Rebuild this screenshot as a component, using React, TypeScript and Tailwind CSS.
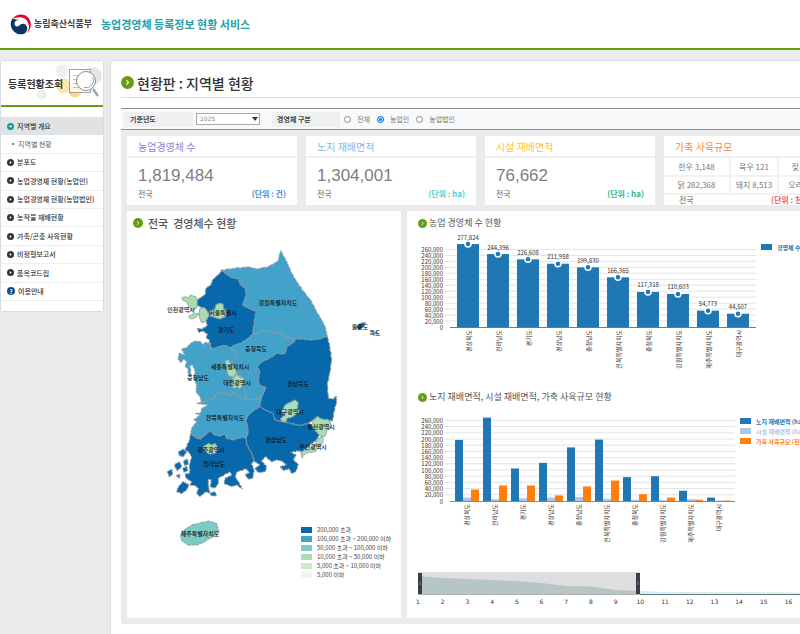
import React, { useState } from "react";

type Point = [number, number];

const MENU = [
  "분포도",
  "농업경영체 현황(농업인)",
  "농업경영체 현황(농업법인)",
  "농작물 재배현황",
  "가축/곤충 사육현황",
  "비정형보고서",
  "품목코드집",
];

const STATS = [
  { title: "농업경영체 수", value: "1,819,484", unit: "(단위 : 건)", titleClass: "text-[#8a86cf]", unitClass: "text-[#3d8fcf]" },
  { title: "노지 재배면적", value: "1,304,001", unit: "(단위 : ha)", titleClass: "text-[#7dbce6]", unitClass: "text-[#4fcfc9]" },
  { title: "시설 재배면적", value: "76,662", unit: "(단위 : ha)", titleClass: "text-[#fcc62f]", unitClass: "text-[#2db795]" },
];

const LIVESTOCK = [
  ["한우 3,148", "육우 121", "젖소 378"],
  ["닭 282,368", "돼지 8,513", "오리 9,204"],
];

const FARMS = [
  { name: "경상북도", value: 277824 },
  { name: "전라남도", value: 244396 },
  { name: "경기도", value: 226608 },
  { name: "경상남도", value: 211958 },
  { name: "충청남도", value: 199830 },
  { name: "전북특별자치도", value: 166365 },
  { name: "충청북도", value: 117318 },
  { name: "강원특별자치도", value: 110603 },
  { name: "제주특별자치도", value: 54773 },
  { name: "대구광역시", value: 44507 },
];

// open field, facility, livestock
const AREAS = [
  [197000, 11000, 37000],
  [269000, 6000, 50000],
  [105000, 9000, 50000],
  [123000, 11000, 18000],
  [173000, 13000, 47000],
  [198000, 7000, 66000],
  [77000, 4000, 22000],
  [80000, 3000, 11000],
  [33000, 6000, 4000],
  [11000, 1000, 1500],
];
const SERIES = ["#1f77b4", "#aec7e8", "#ff7f0e"];

const TICKS = Array.from({ length: 14 }, (_, i) => i * 20000);

const LEGEND = [
  { color: "bg-[#0868ac]", text: "200,000 초과" },
  { color: "bg-[#43a2ca]", text: "100,000 초과 ~ 200,000 이하" },
  { color: "bg-[#7bccc4]", text: "50,000 초과 ~ 100,000 이하" },
  { color: "bg-[#a8ddb5]", text: "10,000 초과 ~ 50,000 이하" },
  { color: "bg-[#ccebc5]", text: "5,000 초과 ~ 10,000 이하" },
  { color: "bg-[#f0f9e8]", text: "5,000 이하" },
];

// region outlines, three map units to the pixel
const REGIONS: { id: string; fill: string; d: string }[] = [
  { id: "gangwon", fill: "#43a2ca", d: "305,195 345,190 385,186 410,192 445,185 475,168 478,150 483,137 492,155 505,180 515,205 530,230 550,258 575,290 590,320 605,345 615,365 622,393 600,402 570,405 545,402 520,403 500,395 480,385 445,380 425,375 415,385 397,388 403,350 408,320 385,310 368,300 378,270 375,250 360,238 355,222 335,218 315,205" },
  { id: "chungbuk", fill: "#43a2ca", d: "350,455 345,440 330,428 345,420 365,412 385,400 397,388 415,385 425,375 445,380 480,385 500,395 520,403 525,408 510,420 500,425 498,440 490,448 470,445 450,460 425,470 412,485 420,500 415,520 418,540 438,548 430,565 425,578 395,585 378,582 375,555 370,540 372,520 355,508 340,490 335,468" },
  { id: "chungnam", fill: "#43a2ca", d: "274,432 300,424 315,420 330,428 345,440 350,455 335,468 340,490 355,508 372,520 370,540 375,555 378,582 352,575 345,562 330,572 310,563 290,565 283,578 260,588 245,592 240,575 228,560 230,540 222,518 226,500 217,480 210,482 214,515 205,510 204,490 195,485 200,470 192,462 182,472 174,462 178,445 195,450 185,432 200,428 212,415 225,408 240,410 250,420 255,412 268,415" },
  { id: "jeonbuk", fill: "#43a2ca", d: "245,592 260,588 283,578 290,565 310,563 330,572 345,562 352,575 378,582 395,585 425,578 418,605 400,618 385,630 378,645 383,665 385,685 378,700 365,697 340,705 320,700 315,687 300,693 285,690 270,678 255,690 240,703 225,697 212,685 215,670 230,650 222,645 240,630 225,625 242,625 245,610 265,600 250,598 230,595" },
  { id: "gyeonggi", fill: "#0868ac", d: "305,195 300,205 290,213 278,225 272,240 257,250 256,268 245,276 232,284 230,300 245,308 262,318 268,330 258,348 262,362 245,372 232,370 236,382 250,378 262,388 258,398 268,405 274,432 300,424 315,420 330,428 345,420 365,412 385,400 397,388 403,350 408,320 385,310 368,300 378,270 375,250 360,238 355,222 335,218 315,205" },
  { id: "gyeongbuk", fill: "#0868ac", d: "622,393 628,420 635,460 630,500 622,540 625,580 640,582 648,573 650,590 642,620 638,648 625,645 605,643 592,635 582,643 565,655 540,662 510,655 485,650 465,645 458,625 435,615 418,605 425,578 430,565 438,548 418,540 415,520 420,500 412,485 425,470 450,460 470,445 490,448 498,440 500,425 510,420 525,408 520,403 545,402 570,405 600,402" },
  { id: "gyeongnam", fill: "#0868ac", d: "418,605 435,615 458,625 465,645 485,650 510,655 540,662 565,655 575,660 585,675 598,690 590,705 570,720 548,740 535,738 512,742 528,750 520,765 535,778 528,800 515,805 508,792 490,796 480,785 500,780 485,768 470,765 455,770 436,755 425,768 440,785 436,800 415,803 405,790 420,780 402,768 395,745 380,720 378,700 385,685 383,665 378,645 385,630 400,618" },
  { id: "jeonnam", fill: "#0868ac", d: "212,685 225,697 240,703 255,690 270,678 285,690 300,693 315,687 320,700 340,705 365,697 378,700 380,720 395,745 402,768 395,775 402,795 398,820 385,822 375,810 388,802 378,792 352,800 345,815 355,830 368,853 350,840 335,845 312,835 315,820 335,810 330,800 295,820 295,835 285,850 270,845 275,825 265,823 265,845 270,865 258,860 240,875 230,865 235,850 225,842 210,840 215,830 198,820 195,807 210,805 208,780 215,755 205,740 195,735 208,705" },
  { id: "jindo", fill: "#0868ac", d: "170,860 175,845 190,830 207,840 200,855 185,865" },
  { id: "sinan1", fill: "#0868ac", d: "175,740 190,733 200,740 190,755 178,752" },
  { id: "sinan2", fill: "#0868ac", d: "162,780 178,770 186,785 172,797" },
  { id: "sinan3", fill: "#0868ac", d: "142,800 155,793 158,808 148,815" },
  { id: "sinan4", fill: "#0868ac", d: "168,812 180,808 178,820" },
  { id: "sinan5", fill: "#0868ac", d: "190,768 203,762 205,778 194,782" },
  { id: "sinan6", fill: "#0868ac", d: "188,790 200,785 204,797 192,802" },
  { id: "wando", fill: "#0868ac", d: "270,865 285,860 290,872 275,873" },
  { id: "ulleung", fill: "#0868ac", d: "708,368 718,356 736,352 731,364 718,374" },
  { id: "dokdo", fill: "#0868ac", d: "758,380 766,384 772,378 768,388" },
  { id: "seoul", fill: "#a8ddb5", d: "270,318 285,312 287,300 300,294 310,298 310,310 320,318 316,335 300,342 285,338 270,332" },
  { id: "ganghwa", fill: "#a8ddb5", d: "185,278 198,275 205,280 212,270 228,276 232,290 230,310 218,316 208,308 200,290 190,287" },
  { id: "incheon", fill: "#a8ddb5", d: "238,312 252,307 262,318 266,332 256,348 248,354 240,345 238,330" },
  { id: "yeongjong", fill: "#a8ddb5", d: "205,335 222,326 238,325 228,336 215,343" },
  { id: "sejong", fill: "#a8ddb5", d: "315,468 325,463 332,475 345,490 350,505 338,517 325,512 320,495" },
  { id: "daejeon", fill: "#a8ddb5", d: "338,520 350,508 358,515 372,520 368,540 360,552 350,545 342,552 335,540" },
  { id: "daegu", fill: "#a8ddb5", d: "485,620 495,600 510,592 525,585 535,593 532,610 538,620 525,630 515,637 500,640 500,650 485,650 482,640 495,630" },
  { id: "ulsan", fill: "#a8ddb5", d: "575,660 582,643 592,635 605,643 625,645 633,655 632,670 620,675 618,690 608,697 598,690 585,675" },
  { id: "busan", fill: "#a8ddb5", d: "548,740 565,733 585,720 590,705 608,693 610,710 600,725 585,740 565,743 550,750 547,760 543,745" },
  { id: "gwangju", fill: "#a8ddb5", d: "250,725 265,715 275,720 285,715 295,730 285,745 270,747 255,740" },
  { id: "jeju", fill: "#7bccc4", d: "182,993 185,980 215,960 265,948 290,955 297,983 255,1010 230,1020 205,1020 185,1007" },
];

const MAP_LABELS: [string, number, number][] = [
  ["인천광역시", 54, 76],
  ["서울특별시", 96, 79],
  ["경기도", 99, 96],
  ["강원특별자치도", 151, 69],
  ["충청북도", 129, 115],
  ["세종특별자치시", 103, 133],
  ["충청남도", 71, 144],
  ["대전광역시", 110, 149],
  ["경상북도", 171, 150],
  ["대구광역시", 163, 178],
  ["울산광역시", 194, 193],
  ["부산광역시", 186, 213],
  ["경상남도", 149, 206],
  ["전북특별자치도", 98, 184],
  ["광주광역시", 84, 216],
  ["전라남도", 87, 230],
  ["제주특별자치도", 73, 300],
  ["울릉도", 233, 93],
  ["독도", 248, 99],
];

// the bend only depends on the two ends, so neighbours keep one common border
const bend = ([ax, ay]: Point, [bx, by]: Point): Point[] => {
  const forward = ax < bx || (ax === bx && ay < by);
  const [x1, y1, x2, y2] = forward ? [ax, ay, bx, by] : [bx, by, ax, ay];
  const len = Math.hypot(x2 - x1, y2 - y1) || 1;
  const pts = [0.2, 0.4, 0.6, 0.8].map((t, i): Point => {
    const h = (Math.sin(x1 * 12.9 + y1 * 78.2 + x2 * 3.7 + i * 41.3) * 1.5) / len;
    return [x1 + (x2 - x1) * t - (y2 - y1) * h, y1 + (y2 - y1) * t + (x2 - x1) * h];
  });
  return forward ? pts : pts.reverse();
};

const outline = (d: string) => {
  const pts = d.split(" ").map(p => p.split(",").map(Number) as Point);
  return pts
    .flatMap((p, i) => [p, ...bend(p, pts[(i + 1) % pts.length])])
    .map(([x, y]) => `${x.toFixed(1)},${y.toFixed(1)}`)
    .join(" ");
};

const Bullet: React.FC<{ className: string }> = ({ className }) => (
  <svg viewBox="0 0 12 12" className={className} aria-hidden="true">
    <circle cx="6" cy="6" r="6" fill="#669d15" />
    <path d="M5 4l2 2-2 2" fill="none" stroke="#fff" strokeWidth="1" />
  </svg>
);

const Emblem = () => (
  <svg viewBox="0 0 66 64" className="h-[21px] w-[22px]" aria-hidden="true">
    <circle cx="33" cy="32" r="31" fill="#fff" />
    <path d="M8 13C20-2 44-3 56 12c11 14 9 35-6 47 5-7 8-15 7-23C55 20 44 9 29 10 20 11 13 13 8 13z" fill="#e4032e" />
    <path d="M8 13C3 19 1 26 2 34c2 15 15 28 31 28 11 0 19-8 19-18 0-9-7-15-15-14-7 1-8 7-14 8-6 1-11-4-10-10 1-6 7-10 16-11-9 1-16 0-21-4z" fill="#0b3567" />
  </svg>
);

const Sidebar = () => (
  <aside className="w-[104px] shrink-0 self-start rounded-[2px] border border-[#d9dce3] bg-white pb-[10px]">
    <div className="relative flex h-[44px] items-center pl-[7px]">
      <svg viewBox="0 0 48 40" className="absolute right-0 top-[3px] h-[40px] w-[48px]" aria-hidden="true">
        <circle cx="7" cy="7" r="6.500" fill="#eff0f5" />
        <circle cx="38" cy="12" r="9" fill="#e6e6e6" />
        <circle cx="9" cy="22" r="7.500" fill="#fdebc0" />
        <path d="M3 19l9 9M5 16l10 10M9 15l7 7M2 23l6 6" stroke="#fbd27c" />
        <circle cx="20" cy="27" r="6.500" fill="#fdd78c" />
        <rect x="14.500" y="5.500" width="21" height="23" fill="#fff" fillOpacity="0.75" stroke="#a0a0a0" />
        <path d="M18 11.500h6M18 15.500h4M18 19.500h4M18 23.500h7" stroke="#c4c4c4" />
        <circle cx="31" cy="17" r="9.500" fill="#fff" fillOpacity="0.9" stroke="#8b8b8b" />
        <path d="M29 23.500a7.500 7.500 0 0 0 9-10" fill="none" stroke="#57b5e4" />
        <path d="M38 25l5 7" stroke="#a4a4a4" strokeWidth="2.500" />
      </svg>
      <span className="absolute left-[36px] top-[29px] size-[9px] rounded-full border border-[#dbe5ea] bg-[#edf3f5]" />
      <h2 className="relative text-[10px] font-bold text-[#333]">등록현황조회</h2>
    </div>
    <nav className="border-t-2 border-[#669d15] pt-[10px]">
      <ul className="grid h-[184px] auto-rows-fr text-[7px] font-medium text-[#333]">
        <li className="flex items-center bg-[#e0e3e6] pl-[6px]">
          <a href="#overview" className="flex items-center gap-[3px]">
            <svg viewBox="0 0 14 14" className="size-[7px]" aria-hidden="true">
              <circle cx="7" cy="7" r="7" fill="#1399a8" />
              <path d="M3.500 5.500h7L7 9.500z" fill="#fff" />
            </svg>
            지역별 개요
          </a>
        </li>
        <li className="flex items-center gap-[4px] border-b border-[#eee] pl-[11px] font-normal text-[#666]">
          <span className="size-[2px] bg-[#3c8dd0]" />
          <a href="#region">지역별 현황</a>
        </li>
        {MENU.map(item => (
          <li key={item} className="flex items-center border-b border-[#eee] pl-[6px]">
            <a href="#menu" className="flex items-center gap-[3px] whitespace-nowrap">
              <svg viewBox="0 0 14 14" className="size-[7px]" aria-hidden="true">
                <circle cx="7" cy="7" r="7" fill="#333" />
                <path d="M5.500 4l4 3-4 3z" fill="#fff" />
              </svg>
              {item}
            </a>
          </li>
        ))}
        <li className="flex items-center border-b border-[#eee] pl-[6px]">
          <a href="#guide" className="flex items-center gap-[3px]">
            <span className="flex size-[8px] items-center justify-center rounded-full bg-[#0c4f91] text-[6px] font-bold text-white">?</span>
            이용안내
          </a>
        </li>
      </ul>
    </nav>
  </aside>
);

const FilterBar = () => {
  const [kind, setKind] = useState("농업인");
  return (
    <form className="flex h-[22px] items-center border-y border-[#868f9c] bg-[#f8f9fb] pl-[3px] text-[7px] text-[#777]">
      <label htmlFor="year" className="flex h-[15px] w-[69px] items-center bg-[#eef0f2] pl-[6px] font-bold text-[#444]">
        기준년도
      </label>
      <div className="relative ml-[3px]">
        <select id="year" className="block h-[12px] w-[64px] appearance-none border border-[#aaa] bg-white pl-[3px] font-['DejaVu_Sans'] text-[6px] leading-none text-[#888]">
          <option>2025</option>
        </select>
        <svg viewBox="0 0 6 4" className="pointer-events-none absolute right-[2px] top-[4px] h-[4px] w-[6px]" aria-hidden="true">
          <path d="M0 0h6L3 4z" fill="#333" />
        </svg>
      </div>
      <span className="ml-[12px] flex h-[15px] w-[68px] items-center bg-[#eef0f2] pl-[5px] font-bold text-[#444]">경영체 구분</span>
      <div className="ml-[4px] flex items-center gap-[7px]">
        {["전체", "농업인", "농업법인"].map(name => (
          <label key={name} className="flex items-center gap-[6px]">
            <input
              type="radio"
              name="kind"
              checked={kind === name}
              onChange={() => setKind(name)}
              className="size-[7px] appearance-none rounded-full border border-[#888] bg-white checked:border-[#0b74f5] checked:bg-[#0b74f5] checked:shadow-[inset_0_0_0_1px_#fff]"
            />
            {name}
          </label>
        ))}
      </div>
    </form>
  );
};

const StatCards = () => (
  <div className="grid h-[69px] grid-cols-4 gap-[9px]">
    {STATS.map(s => (
      <section key={s.title} className="flex flex-col bg-white">
        <h3 className={`flex h-[22px] items-center border-b-2 border-[#f1f1f1] pl-[11px] text-[10px] ${s.titleClass}`}>{s.title}</h3>
        <div className="flex flex-1 flex-col justify-end px-[11px] pb-[6px]">
          <p className="font-['Liberation_Sans'] text-[17px] leading-[20px] text-[#808080]">{s.value}</p>
          <p className="mt-[2px] flex justify-between text-[8px] leading-[11px] text-[#666]">
            전국 <b className={s.unitClass}>{s.unit}</b>
          </p>
        </div>
      </section>
    ))}
    <section className="flex flex-col bg-white">
      <h3 className="flex h-[22px] items-center border-b-2 border-[#f1f1f1] pl-[11px] text-[10px] text-[#fb8c45]">가축 사육규모</h3>
      <table className="w-full table-fixed border-collapse text-center text-[8px] leading-[10px] text-[#777]">
        <colgroup>
          <col className="w-[66px]" />
          <col className="w-[48px]" />
          <col />
        </colgroup>
        <tbody>
          {LIVESTOCK.map(row => (
            <tr key={row[0]} className="h-[18px] border-b-2 border-[#f1f1f1]">
              {row.map(cell => (
                <td key={cell} className="whitespace-nowrap border-r-2 border-[#f1f1f1] p-0 last:border-r-0">{cell}</td>
              ))}
            </tr>
          ))}
        </tbody>
      </table>
      <p className="flex flex-1 items-center justify-between pl-[15px] pr-[14px] text-[8px] leading-[10px] text-[#666]">
        전국 <b className="whitespace-nowrap text-[#f2566b]">(단위 : 천마리)</b>
      </p>
    </section>
  </div>
);

const RegionMap = () => (
  <svg className="block h-[320px] w-[274px]" role="img" aria-label="전국 경영체수 현황">
    <g transform="translate(-7 -28) scale(0.33333)" stroke="#8f9ba1" strokeWidth="2.500" strokeLinejoin="round">
      {REGIONS.map(r => (
        <polygon key={r.id} points={outline(r.d)} fill={r.fill} />
      ))}
    </g>
    <g className="fill-[#111] text-[6px] font-medium" textAnchor="middle" dominantBaseline="central">
      {MAP_LABELS.map(([name, x, y]) => (
        <text key={name} x={x} y={y}>{name}</text>
      ))}
    </g>
  </svg>
);

interface AxisProps {
  base: number;
  step: number;
  right: number;
}

const Axis: React.FC<AxisProps> = ({ base, step, right }) => (
  <g>
    {TICKS.map((t, i) => (
      <g key={t}>
        {i > 0 && <line x1="38" x2={right} y1={base - i * step} y2={base - i * step} stroke="#e3e3e3" />}
        <text x="36" y={base - i * step} textAnchor="end" dominantBaseline="central">{t.toLocaleString("en-US")}</text>
      </g>
    ))}
  </g>
);

const FarmChart = () => {
  const base = 94;
  const step = 5.97;
  return (
    <svg className="block h-[153px] w-full fill-[#333] text-[6px]" role="img" aria-label="농업 경영체 수 현황">
      <Axis base={base} step={step} right={349} />
      {FARMS.map((f, i) => {
        const x = 50 + i * 30;
        const h = (f.value / 20000) * step;
        return (
          <g key={f.name}>
            <rect x={x} y={base - h} width="22" height={h} fill="#1f77b4" />
            <circle cx={x + 11} cy={base - h} r="3" fill="#1f77b4" stroke="#fff" strokeWidth="1.500" />
            <text x={x + 11} y={base - h - 7} textAnchor="middle" dominantBaseline="central">{f.value.toLocaleString("en-US")}</text>
            <text transform={`translate(${x + 11} ${base + 3}) rotate(-90)`} textAnchor="end" dominantBaseline="central">{f.name}</text>
          </g>
        );
      })}
      <line x1="43" x2="349" y1={base + 0.5} y2={base + 0.5} stroke="#777" />
      <rect x="354" y="11" width="11" height="6" fill="#1f77b4" />
      <text x="370" y="14" fill="#1f77b4" className="font-bold" dominantBaseline="central">경영체 수 (건)</text>
    </svg>
  );
};

const AreaChart = () => {
  const base = 93;
  const step = 6.2;
  return (
    <svg className="block h-[152px] w-full fill-[#333] text-[6px]" role="img" aria-label="재배면적, 사육규모 현황">
      <Axis base={base} step={step} right={328} />
      {AREAS.map((row, i) => (
        <g key={FARMS[i].name}>
          {row.map((v, n) => (
            <rect key={n} x={48 + i * 28 + n * 8} y={base - (v / 20000) * step} width="8" height={(v / 20000) * step} fill={SERIES[n]} />
          ))}
          <text transform={`translate(${59 + i * 28} ${base + 3}) rotate(-90)`} textAnchor="end" dominantBaseline="central">{FARMS[i].name}</text>
        </g>
      ))}
      <line x1="43" x2="328" y1={base + 0.5} y2={base + 0.5} stroke="#888" />
      {["노지 재배면적 (ha)", "시설 재배면적 (ha)", "가축 사육규모 (천마리)"].map((name, n) => (
        <g key={name} fill={SERIES[n]} className="font-bold">
          <rect x="333" y={10 + n * 10} width="11" height="6" />
          <text x="349" y={13 + n * 10} dominantBaseline="central">{name}</text>
        </g>
      ))}
    </svg>
  );
};

const RangeBrush = () => (
  <svg className="block h-[58px] w-full fill-[#333] text-[6px]" role="img" aria-label="범위">
    <path d="M233 31L258 32L406 32.500V34H233z" fill="#dcebeb" />
    <rect x="11" y="12" width="222" height="22" fill="#dedede" />
    <path d="M11 16L36 18L60 19L85 20L110 21L134 23L159 26L184 26.500L208 30L233 31V34H11z" fill="#b6c5c5" />
    <path d="M11 34.500H233" stroke="#b0b0b0" />
    <path d="M233 34.500H427" stroke="#5f7f80" />
    {[11, 229].map(x => (
      <g key={x}>
        <rect x={x} y="13" width="4" height="21" fill="#3d3c4c" />
        <path d={`M${x + 2} 22v3`} stroke="#ccc" strokeWidth="0.500" />
      </g>
    ))}
    <g className="font-['DejaVu_Sans']" textAnchor="middle" dominantBaseline="central">
      {Array.from({ length: 17 }, (_, i) => (
        <text key={i} x={11 + i * 24.7} y="41">{i + 1}</text>
      ))}
    </g>
  </svg>
);

export default function App() {
  return (
    <div className="min-h-screen overflow-hidden bg-[#ebebeb] font-['Noto_Sans_CJK_KR',sans-serif]">
      <header className="flex h-[50px] items-center gap-[9px] border-b-2 border-[#669d15] bg-white pl-[10px]">
        <a href="#home" className="flex items-center gap-[2px] text-[9px] font-bold text-[#444]">
          <Emblem />
          농림축산식품부
        </a>
        <h1 className="text-[11px] font-bold text-[#27a0a8]">농업경영체 등록정보 현황 서비스</h1>
      </header>

      <div className="flex min-w-[850px] gap-[6px] pt-[10px]">
        <Sidebar />
        <main className="min-w-0 flex-1 border-l border-t border-[#d9dce3] bg-white px-[10px] pb-[10px] pt-[7px]">
          <div className="flex h-[30px] items-center gap-[3px] border-b border-[#ddd]">
            <Bullet className="size-[13px]" />
            <h2 className="text-[14px] font-medium leading-none text-[#333]">현황판 : 지역별 현황</h2>
          </div>

          <div className="mt-[10px]">
            <FilterBar />
            <div className="flex flex-col gap-[6px] bg-[#ebebeb] p-[6px]">
              <StatCards />
              <div className="flex gap-[6px]">
                <section className="relative w-[274px] shrink-0 bg-white pt-[2px]">
                  <h3 className="flex h-[20px] items-center gap-[5px] whitespace-pre pl-[6px] text-[11px] font-medium text-[#555]">
                    <Bullet className="size-[10px]" />
                    {"전국  경영체수 현황"}
                  </h3>
                  <RegionMap />
                  {/* Density legend */}
                  <ul className="absolute bottom-[39px] left-[174px] text-[6px] text-[#444]">
                    {LEGEND.map(item => (
                      <li key={item.text} className="flex h-[9px] items-center gap-[5px] whitespace-nowrap">
                        <span className={`h-[6px] w-[11px] ${item.color}`} />
                        {item.text}
                      </li>
                    ))}
                  </ul>
                </section>

                <section className="min-w-0 flex-1 bg-white">
                  <h3 className="flex h-[22px] items-center gap-[2px] pl-[11px] pt-[2px] text-[9px] text-[#555]">
                    <Bullet className="size-[9px]" />
                    농업 경영체 수 현황
                  </h3>
                  <FarmChart />
                  <h3 className="flex h-[22px] items-center gap-[2px] pl-[11px] text-[9px] text-[#555]">
                    <Bullet className="size-[9px]" />
                    노지 재배면적, 시설 재배면적, 가축 사육규모 현황
                  </h3>
                  <AreaChart />
                  <RangeBrush />
                </section>
              </div>
            </div>
          </div>
        </main>
      </div>
    </div>
  );
}
